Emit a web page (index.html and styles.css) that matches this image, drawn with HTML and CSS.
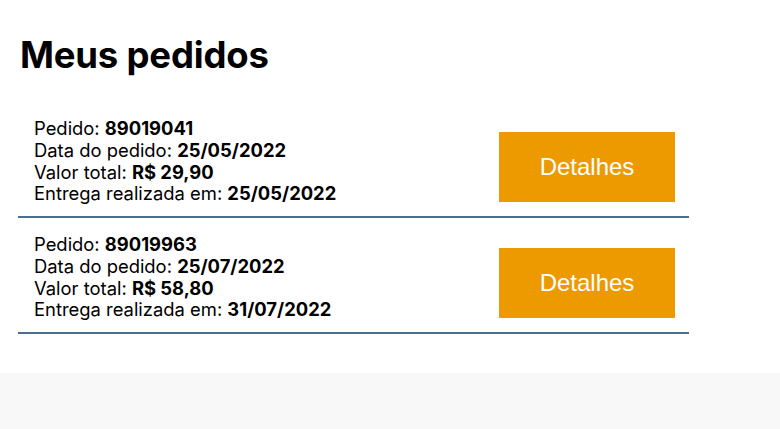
FILE: index.html
```html
<!DOCTYPE html>
<html lang="pt-BR">
<head>
<meta charset="utf-8">
<title>Meus pedidos</title>
<link rel="stylesheet" href="styles.css">
</head>
<body>
<main class="page">
  <h1 class="title">Meus pedidos</h1>
  <ul class="orders">
    <li class="order">
      <div class="info">
        <div>Pedido: <b>89019041</b></div>
        <div>Data do pedido: <b>25/05/2022</b></div>
        <div>Valor total: <b>R$ 29,90</b></div>
        <div>Entrega realizada em: <b>25/05/2022</b></div>
      </div>
      <button class="details">Detalhes</button>
    </li>
    <li class="order">
      <div class="info">
        <div>Pedido: <b>89019963</b></div>
        <div>Data do pedido: <b>25/07/2022</b></div>
        <div>Valor total: <b>R$ 58,80</b></div>
        <div>Entrega realizada em: <b>31/07/2022</b></div>
      </div>
      <button class="details">Detalhes</button>
    </li>
  </ul>
</main>
<footer class="footer"></footer>
</body>
</html>
```
FILE: styles.css
```css
html, body {
  margin: 0;
  padding: 0;
  background: #ffffff;
}
body {
  font-family: Inter, "Noto Sans", sans-serif;
  color: #000;
}
.page {
  padding: 0 18px 39px 18px;
}
.title {
  margin: 0;
  padding: 33px 0 0 2px;
  font-size: 36.5px;
  font-weight: 700;
  line-height: 44px;
  letter-spacing: -0.2px;
}
.orders {
  list-style: none;
  margin: 0;
  padding: 0;
  width: 671px;
}
.order {
  display: flex;
  justify-content: space-between;
  align-items: flex-start;
  padding: 16px 14px 11px 16px;
  border-bottom: 2px solid #4f6e8a;
}
.order:first-child {
  padding-top: 41px;
}
.info {
  font-size: 18.4px;
  line-height: 21.75px;
}
.info b {
  font-weight: 700;
}
.details {
  margin-top: 14px;
  width: 176px;
  height: 70px;
  border: 0;
  background: #ec9a00;
  color: #fff;
  font-family: "Liberation Sans", Arial, sans-serif;
  font-size: 24px;
  cursor: pointer;
}
.footer {
  height: 56px;
  background: #f8f8f8;
}
```
